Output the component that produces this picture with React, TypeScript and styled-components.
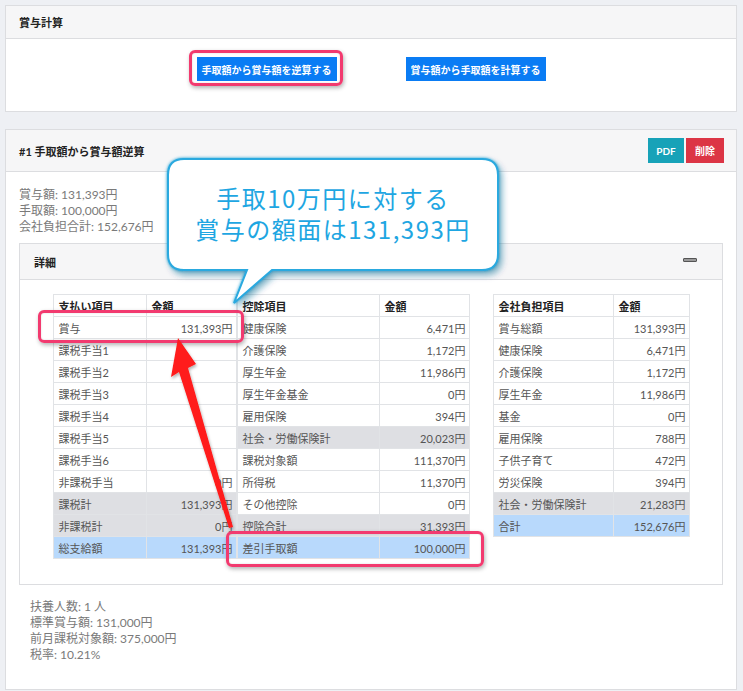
import React from "react";
import styled, { createGlobalStyle } from "styled-components";

const GlobalStyle = createGlobalStyle`
  html, body { margin: 0; padding: 0; }
  body {
    background: #eef0f4;
    font-family: Lato, "Noto Sans CJK JP", sans-serif;
    color: #333;
  }
  * { box-sizing: border-box; }
`;

const Page = styled.div`
  position: relative;
  width: 743px;
  height: 691px;
  overflow: hidden;
  padding: 5px 6px 0 5px;
`;

const Card = styled.section<{ $gap?: number }>`
  background: #fff;
  border: 1px solid #dcdde0;
  margin-top: ${(p) => p.$gap ?? 0}px;
`;

const CardHeader = styled.div<{ $h: number }>`
  height: ${(p) => p.$h}px;
  background: #f6f6f7;
  border-bottom: 1px solid #dcdde0;
  display: flex;
  align-items: center;
  justify-content: space-between;
  padding: 0 12px 0 13px;
  font-size: 11px;
  font-weight: 700;
  color: #222;
`;

const ButtonRow = styled.div`
  display: flex;
  justify-content: center;
  gap: 69px;
  padding: 18px 0 30px;
`;

const Btn = styled.button<{ $variant: "primary" | "info" | "danger" }>`
  height: 24px;
  border: none;
  padding: 0 5px;
  color: #fff;
  font-family: Lato, "Noto Sans CJK JP", sans-serif;
  font-size: 10px;
  font-weight: 700;
  cursor: pointer;
  background: ${(p) =>
    p.$variant === "primary" ? "#0a7cf4" : p.$variant === "info" ? "#17a2b8" : "#dc3545"};
`;

const SmallBtn = styled(Btn)<{ $w?: number }>`
  height: 25px;
  padding: 0;
  width: ${(p) => p.$w ?? 36}px;
`;

const BtnGroup = styled.div`
  display: flex;
  gap: 2px;
`;

const CardBody = styled.div`
  padding: 15px 13px 26px 13px;
`;

const InfoLines = styled.div<{ $indent?: number }>`
  font-size: 12px;
  line-height: 16px;
  color: #7a7a7a;
  padding-left: ${(p) => p.$indent ?? 0}px;
`;

const DetailCard = styled.div`
  border: 1px solid #dcdde0;
  margin: 8px 0 14px;
`;

const DetailHeader = styled.div`
  height: 36px;
  background: #f6f6f7;
  border-bottom: 1px solid #dcdde0;
  display: flex;
  align-items: center;
  justify-content: space-between;
  padding: 0 25px 0 14px;
  font-size: 11px;
  font-weight: 700;
  color: #222;
`;

const MinusIcon = styled.span`
  display: block;
  width: 14px;
  height: 4px;
  border-radius: 1px;
  border: 1px solid #555;
  background: #9a9a9a;
  margin-top: -4px;
`;

const DetailBody = styled.div`
  display: flex;
  justify-content: center;
  align-items: flex-start;
  padding: 14px 0 24px;
  height: 304px;
`;

const TableGap = styled.div`
  width: 23px;
`;

const Table = styled.table`
  border-collapse: collapse;
  font-size: 11px;
  color: #555;
  table-layout: fixed;
`;

const Th = styled.th<{ $w: number }>`
  width: ${(p) => p.$w}px;
  height: 22px;
  border: 1px solid #e1e3e6;
  text-align: left;
  padding: 0 4px 0 5px;
  font-weight: 700;
  color: #222;
`;

const Tr = styled.tr<{ $tone?: "gray" | "blue" }>`
  background: ${(p) =>
    p.$tone === "gray" ? "#dedfe3" : p.$tone === "blue" ? "#b8d9fc" : "#fff"};
`;

const Td = styled.td<{ $num?: boolean }>`
  height: 22px;
  border: 1px solid #e1e3e6;
  padding: 0 3px 0 5px;
  text-align: ${(p) => (p.$num ? "right" : "left")};
  white-space: nowrap;
`;

const Highlight = styled.div<{ $x: number; $y: number; $w: number; $h: number }>`
  position: absolute;
  left: ${(p) => p.$x}px;
  top: ${(p) => p.$y}px;
  width: ${(p) => p.$w}px;
  height: ${(p) => p.$h}px;
  border: 3px solid #f23a6f;
  border-radius: 6px;
  box-shadow: 1px 2px 4px rgba(0, 0, 0, 0.3), inset 0 0 2px rgba(0, 0, 0, 0.15);
  pointer-events: none;
`;

const OverlaySvg = styled.svg`
  position: absolute;
  left: 0;
  top: 0;
  pointer-events: none;
`;

const BubbleText = styled.div`
  position: absolute;
  left: 168px;
  top: 159px;
  width: 330px;
  height: 111px;
  display: flex;
  flex-direction: column;
  align-items: center;
  justify-content: center;
  gap: 1px;
  padding-bottom: 3px;
  font-family: "Noto Sans CJK JP", sans-serif;
  font-size: 24px;
  line-height: 30px;
  letter-spacing: 1.5px;
  color: #1ea6e2;
  pointer-events: none;
`;

type Row = { label: string; value: string; tone?: "gray" | "blue" };

const payRows: Row[] = [
  { label: "賞与", value: "131,393円" },
  { label: "課税手当1", value: "" },
  { label: "課税手当2", value: "" },
  { label: "課税手当3", value: "" },
  { label: "課税手当4", value: "" },
  { label: "課税手当5", value: "" },
  { label: "課税手当6", value: "" },
  { label: "非課税手当", value: "0円" },
  { label: "課税計", value: "131,393円", tone: "gray" },
  { label: "非課税計", value: "0円", tone: "gray" },
  { label: "総支給額", value: "131,393円", tone: "blue" },
];

const deductRows: Row[] = [
  { label: "健康保険", value: "6,471円" },
  { label: "介護保険", value: "1,172円" },
  { label: "厚生年金", value: "11,986円" },
  { label: "厚生年金基金", value: "0円" },
  { label: "雇用保険", value: "394円" },
  { label: "社会・労働保険計", value: "20,023円", tone: "gray" },
  { label: "課税対象額", value: "111,370円" },
  { label: "所得税", value: "11,370円" },
  { label: "その他控除", value: "0円" },
  { label: "控除合計", value: "31,393円", tone: "gray" },
  { label: "差引手取額", value: "100,000円", tone: "blue" },
];

const companyRows: Row[] = [
  { label: "賞与総額", value: "131,393円" },
  { label: "健康保険", value: "6,471円" },
  { label: "介護保険", value: "1,172円" },
  { label: "厚生年金", value: "11,986円" },
  { label: "基金", value: "0円" },
  { label: "雇用保険", value: "788円" },
  { label: "子供子育て", value: "472円" },
  { label: "労災保険", value: "394円" },
  { label: "社会・労働保険計", value: "21,283円", tone: "gray" },
  { label: "合計", value: "152,676円", tone: "blue" },
];

function DataTable({ head, rows, w1, w2 }: { head: string; rows: Row[]; w1: number; w2: number }) {
  return (
    <Table>
      <thead>
        <tr>
          <Th $w={w1}>{head}</Th>
          <Th $w={w2}>金額</Th>
        </tr>
      </thead>
      <tbody>
        {rows.map((r, i) => (
          <Tr key={i} $tone={r.tone}>
            <Td>{r.label}</Td>
            <Td $num>{r.value}</Td>
          </Tr>
        ))}
      </tbody>
    </Table>
  );
}

export default function App() {
  return (
    <>
      <GlobalStyle />
      <Page>
        <Card>
          <CardHeader $h={33}>賞与計算</CardHeader>
          <ButtonRow>
            <Btn $variant="primary">手取額から賞与額を逆算する</Btn>
            <Btn $variant="primary">賞与額から手取額を計算する</Btn>
          </ButtonRow>
        </Card>

        <Card $gap={17}>
          <CardHeader $h={42}>
            <span>#1 手取額から賞与額逆算</span>
            <BtnGroup>
              <SmallBtn $variant="info" $w={36}>PDF</SmallBtn>
              <SmallBtn $variant="danger" $w={38}>削除</SmallBtn>
            </BtnGroup>
          </CardHeader>
          <CardBody>
            <InfoLines>
              <div>賞与額: 131,393円</div>
              <div>手取額: 100,000円</div>
              <div>会社負担合計: 152,676円</div>
            </InfoLines>
            <DetailCard>
              <DetailHeader>
                <span>詳細</span>
                <MinusIcon />
              </DetailHeader>
              <DetailBody>
                <DataTable head="支払い項目" rows={payRows} w1={93} w2={90} />
                <DataTable head="控除項目" rows={deductRows} w1={142} w2={90} />
                <TableGap />
                <DataTable head="会社負担項目" rows={companyRows} w1={120} w2={76} />
              </DetailBody>
            </DetailCard>
            <InfoLines $indent={11}>
              <div>扶養人数: 1 人</div>
              <div>標準賞与額: 131,000円</div>
              <div>前月課税対象額: 375,000円</div>
              <div>税率: 10.21%</div>
            </InfoLines>
          </CardBody>
        </Card>

        <Highlight $x={189} $y={50} $w={154} $h={36} />
        <Highlight $x={38} $y={310} $w={206} $h={33} />
        <Highlight $x={226} $y={531} $w={258} $h={36} />

        <OverlaySvg width={743} height={691} viewBox="0 0 743 691">
          <defs>
            <filter id="arrowShadow" x="-50%" y="-20%" width="200%" height="140%">
              <feDropShadow dx="1" dy="2" stdDeviation="1.5" floodColor="#000" floodOpacity="0.3" />
            </filter>
            <filter id="bubbleGlow" x="-10%" y="-20%" width="120%" height="150%">
              <feDropShadow dx="3" dy="4" stdDeviation="3" floodColor="#000" floodOpacity="0.3" />
              <feDropShadow dx="0" dy="0" stdDeviation="1.5" floodColor="#1d9bd6" floodOpacity="0.9" />
            </filter>
          </defs>
          <polygon
            points="178,338 196,364 188,368 233,527 229,528 179,372 171,377"
            fill="#ff1a1a"
            filter="url(#arrowShadow)"
          />
          <path
            d="M 184 159 H 482 Q 498 159 498 175 V 254 Q 498 270 482 270 H 272 L 234 303 L 247 270 H 184 Q 168 270 168 254 V 175 Q 168 159 184 159 Z"
            fill="#fff"
            stroke="#2aa9df"
            strokeWidth={2}
            filter="url(#bubbleGlow)"
          />
        </OverlaySvg>
        <BubbleText>
          <div>手取10万円に対する</div>
          <div>賞与の額面は131,393円</div>
        </BubbleText>
      </Page>
    </>
  );
}
